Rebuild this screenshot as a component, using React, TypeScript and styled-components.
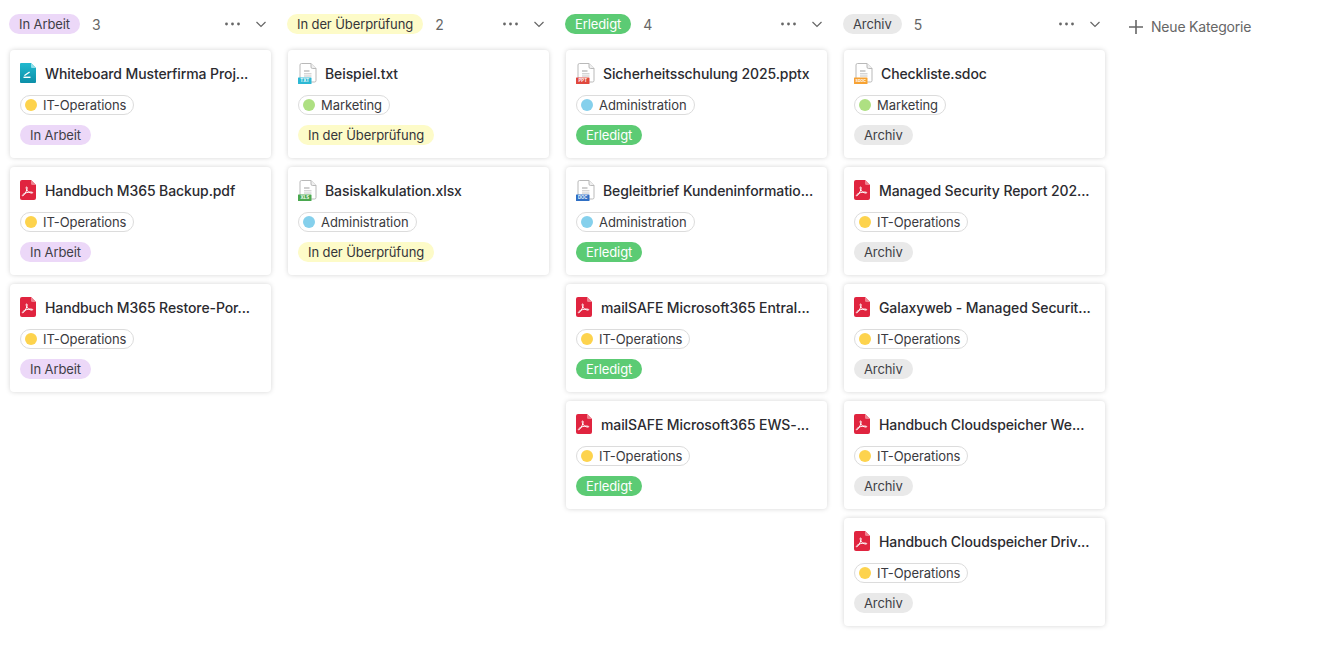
import React from "react";
import styled, { createGlobalStyle } from "styled-components";

type Status = "arbeit" | "pruefung" | "erledigt" | "archiv";
type Group = "it" | "marketing" | "admin";
type FileKind = "board" | "pdf" | "txt" | "xls" | "ppt" | "doc" | "sdoc";

const statusLabel: Record<Status, string> = {
  arbeit: "In Arbeit",
  pruefung: "In der Überprüfung",
  erledigt: "Erledigt",
  archiv: "Archiv",
};

const statusColors: Record<Status, { bg: string; fg: string }> = {
  arbeit: { bg: "#ecd8f8", fg: "#3f3f46" },
  pruefung: { bg: "#fdfbc8", fg: "#35353a" },
  erledigt: { bg: "#5ccb74", fg: "#ffffff" },
  archiv: { bg: "#e9e9e9", fg: "#3f3f46" },
};

const groups: Record<Group, { label: string; color: string }> = {
  it: { label: "IT-Operations", color: "#fdd34d" },
  marketing: { label: "Marketing", color: "#aee082" },
  admin: { label: "Administration", color: "#85d0ec" },
};

const badges: Record<string, { label: string; color: string; size: number }> = {
  txt: { label: "TXT", color: "#2cb8d4", size: 4.4 },
  xls: { label: "XLS", color: "#4aa84f", size: 4.4 },
  ppt: { label: "PPT", color: "#e0483e", size: 4.4 },
  doc: { label: "DOC", color: "#2f6fc4", size: 4.2 },
  sdoc: { label: "SDOC", color: "#f7a233", size: 3.6 },
};

const columns: { status: Status; cards: { title: string; kind: FileKind; group: Group }[] }[] = [
  {
    status: "arbeit",
    cards: [
      { title: "Whiteboard Musterfirma Proj...", kind: "board", group: "it" },
      { title: "Handbuch M365 Backup.pdf", kind: "pdf", group: "it" },
      { title: "Handbuch M365 Restore-Por...", kind: "pdf", group: "it" },
    ],
  },
  {
    status: "pruefung",
    cards: [
      { title: "Beispiel.txt", kind: "txt", group: "marketing" },
      { title: "Basiskalkulation.xlsx", kind: "xls", group: "admin" },
    ],
  },
  {
    status: "erledigt",
    cards: [
      { title: "Sicherheitsschulung 2025.pptx", kind: "ppt", group: "admin" },
      { title: "Begleitbrief Kundeninformatio...", kind: "doc", group: "admin" },
      { title: "mailSAFE Microsoft365 EntraI...", kind: "pdf", group: "it" },
      { title: "mailSAFE Microsoft365 EWS-...", kind: "pdf", group: "it" },
    ],
  },
  {
    status: "archiv",
    cards: [
      { title: "Checkliste.sdoc", kind: "sdoc", group: "marketing" },
      { title: "Managed Security Report 202...", kind: "pdf", group: "it" },
      { title: "Galaxyweb - Managed Securit...", kind: "pdf", group: "it" },
      { title: "Handbuch Cloudspeicher We...", kind: "pdf", group: "it" },
      { title: "Handbuch Cloudspeicher Driv...", kind: "pdf", group: "it" },
    ],
  },
];

const GlobalStyle = createGlobalStyle`
  html, body {
    margin: 0;
    background: #fff;
    font-family: Inter, "Liberation Sans", sans-serif;
    -webkit-font-smoothing: antialiased;
  }
`;

const Board = styled.div`
  display: flex;
  align-items: flex-start;
  gap: 17px;
  padding: 14px 0 0 10px;
  width: 1326px;
  height: 645px;
  box-sizing: border-box;
  overflow: hidden;
`;

const Column = styled.section`
  width: 261px;
  flex: none;
`;

const ColumnHeader = styled.header`
  display: flex;
  align-items: center;
  height: 20px;
  margin: 0 0 16px -1px;
  padding-right: 5px;
`;

const Pill = styled.span<{ $status: Status }>`
  display: inline-flex;
  align-items: center;
  height: 20px;
  padding: 0 10px;
  border-radius: 10px;
  font-size: 13px;
  line-height: 20px;
  letter-spacing: -0.1px;
  white-space: nowrap;
  background: ${(p) => statusColors[p.$status].bg};
  color: ${(p) => statusColors[p.$status].fg};
`;

const Count = styled.span`
  margin-left: 12px;
  font-size: 14px;
  letter-spacing: -0.4px;
  color: #666;
`;

const HeaderActions = styled.div`
  margin-left: auto;
  display: flex;
  align-items: center;
  gap: 16px;
  color: #666;
`;

const CardList = styled.div`
  display: flex;
  flex-direction: column;
  gap: 9px;
`;

const Card = styled.article`
  height: 108px;
  box-sizing: border-box;
  padding: 11px 10px 0;
  border-radius: 4px;
  background: #fff;
  box-shadow: 0 0 5px rgba(0, 0, 0, 0.17);
  display: flex;
  flex-direction: column;
  align-items: flex-start;
`;

const TitleRow = styled.div`
  display: flex;
  align-items: center;
  height: 24px;
  margin-bottom: 10px;
`;

const IconSlot = styled.span<{ $wide: boolean }>`
  display: flex;
  width: ${(p) => (p.$wide ? 27 : 25)}px;
  flex: none;
`;

const Title = styled.span`
  font-size: 14px;
  font-weight: 500;
  letter-spacing: -0.1px;
  color: #2b2b30;
  white-space: nowrap;
`;

const GroupTag = styled.span`
  display: inline-flex;
  align-items: center;
  height: 20px;
  box-sizing: border-box;
  padding: 0 7px 0 4px;
  border: 1px solid #dcdcdc;
  border-radius: 10px;
  font-size: 13px;
  letter-spacing: -0.07px;
  color: #3a3a40;
  margin-bottom: 10px;
`;

const Dot = styled.i<{ $color: string }>`
  width: 12px;
  height: 12px;
  border-radius: 50%;
  margin-right: 6px;
  background: ${(p) => p.$color};
`;

const NewCategory = styled.button`
  display: flex;
  align-items: center;
  gap: 8px;
  height: 20px;
  margin: 2.500px 0 0 7px;
  padding: 0;
  border: 0;
  background: none;
  font: inherit;
  font-size: 14px;
  letter-spacing: -0.2px;
  color: #666;
`;

const Dots = () => (
  <svg width="15" height="4" viewBox="0 0 15 4" fill="currentColor">
    <circle cx="1.500" cy="2" r="1.400" />
    <circle cx="7.500" cy="2" r="1.400" />
    <circle cx="13.500" cy="2" r="1.400" />
  </svg>
);

const Chevron = () => (
  <svg width="10" height="7" viewBox="0 0 10 7" fill="none" stroke="currentColor" strokeWidth="1.200">
    <path d="M.5 1l4.500 4.500L9.500 1" />
  </svg>
);

const Plus = () => (
  <svg width="14" height="14" viewBox="0 0 14 14" stroke="currentColor" strokeWidth="1.600">
    <path d="M7 0v14M0 7h14" />
  </svg>
);

const FileIcon = ({ kind }: { kind: FileKind }) => {
  if (kind === "pdf") {
    return (
      <svg width="16" height="20" viewBox="0 0 16 20">
        <path d="M2 0h9l5 5v13a2 2 0 0 1-2 2H2a2 2 0 0 1-2-2V2a2 2 0 0 1 2-2z" fill="#e0243f" />
        <path d="M11 0l5 5h-3.500A1.500 1.500 0 0 1 11 3.500z" fill="#f0818f" />
        <path
          d="M2.800 15.800c1.500-.7 3.200-3.300 4.300-7 .2-.9 0-2-.6-1.900-.6.100-.4 1.400.1 2.500.9 2 2.700 3.600 5.500 3.700.7 0 .9-.6.300-.8-1.800-.6-5-.2-7.700 1-1.300.7-2.900 2-2.200 2.500z"
          fill="none"
          stroke="#fff"
          strokeWidth="1"
        />
      </svg>
    );
  }
  if (kind === "board") {
    return (
      <svg width="16" height="20" viewBox="0 0 16 20">
        <defs>
          <linearGradient id="boardFill" x1="0" y1="0" x2="0" y2="1">
            <stop offset="0" stopColor="#21b9cf" />
            <stop offset="1" stopColor="#0c8fa8" />
          </linearGradient>
        </defs>
        <path d="M1 0h10l5 5v14a1 1 0 0 1-1 1H1a1 1 0 0 1-1-1V1a1 1 0 0 1 1-1z" fill="url(#boardFill)" />
        <path d="M11 0l5 5h-4a1 1 0 0 1-1-1z" fill="#8fdfea" />
        <path d="M3.500 14.300h7" stroke="#fff" strokeWidth="1.400" />
        <path d="M4.500 11.800l4.700-3.400 .8 1-4.700 3.400-1.200.2z" fill="#fff" />
      </svg>
    );
  }
  const badge = badges[kind];
  return (
    <svg width="19" height="21" viewBox="0 0 19 21">
      <path
        d="M3.500 .5h9.500l5 5v12a1.500 1.500 0 0 1-1.500 1.500h-13a1.500 1.500 0 0 1-1.500-1.500V2a1.500 1.500 0 0 1 1.500-1.500z"
        fill="#fff"
        stroke="#b9b9b9"
      />
      <path d="M13 .5v3.500a1.500 1.500 0 0 0 1.500 1.500H18" fill="#efefef" stroke="#b9b9b9" />
      <path d="M6 7h5.500v2H6z" fill="#cfcfcf" />
      <path d="M6 10.800h7.500M6 13h7.500" stroke="#c4c4c4" />
      <rect x="0" y="14.500" width="13.500" height="6.500" rx="0.500" fill={badge.color} />
      <text
        x="6.750"
        y="19.400"
        textAnchor="middle"
        fontSize={badge.size}
        fontWeight="700"
        fill="#fff"
        fontFamily="Inter, sans-serif"
      >
        {badge.label}
      </text>
    </svg>
  );
};

export default function App() {
  return (
    <>
      <GlobalStyle />
      <Board>
        {columns.map((col) => (
          <Column key={col.status}>
            <ColumnHeader>
              <Pill $status={col.status}>{statusLabel[col.status]}</Pill>
              <Count>{col.cards.length}</Count>
              <HeaderActions>
                <Dots />
                <Chevron />
              </HeaderActions>
            </ColumnHeader>
            <CardList>
              {col.cards.map((card) => (
                <Card key={card.title}>
                  <TitleRow>
                    <IconSlot $wide={card.kind !== "pdf" && card.kind !== "board"}>
                      <FileIcon kind={card.kind} />
                    </IconSlot>
                    <Title>{card.title}</Title>
                  </TitleRow>
                  <GroupTag>
                    <Dot $color={groups[card.group].color} />
                    {groups[card.group].label}
                  </GroupTag>
                  <Pill $status={col.status}>{statusLabel[col.status]}</Pill>
                </Card>
              ))}
            </CardList>
          </Column>
        ))}
        <NewCategory>
          <Plus />
          Neue Kategorie
        </NewCategory>
      </Board>
    </>
  );
}
